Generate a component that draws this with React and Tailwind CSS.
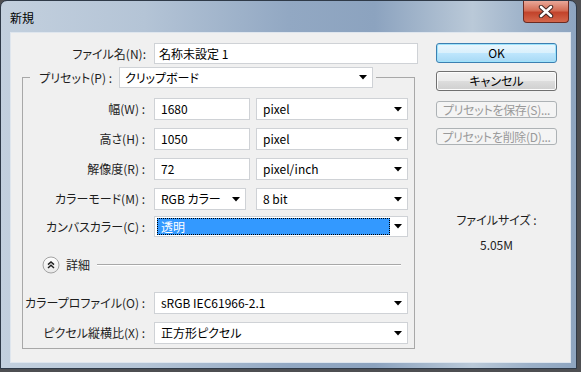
import React from 'react';

const Arrow = () => (
    <svg width="8" height="5" viewBox="0 0 8 5" className="shrink-0">
        <path d="M0 0 H8 L4 4.5 Z" fill="#000" />
    </svg>
);

const Field = ({ width, children }) => (
    <div className={`${width} h-[22px] bg-white border border-[#cfd2d6] flex items-center pl-[6px] text-black`}>
        {children}
    </div>
);

const Select = ({ width, value }) => (
    <div className={`${width} h-[22px] bg-white border border-[#cfd2d6] flex items-center justify-between pl-[6px] pr-[5px] text-black`}>
        <span>{value}</span>
        <Arrow />
    </div>
);

const Row = ({ label, children, className = '' }) => (
    <div className={`flex items-center ${className}`}>
        <span className="w-[129px] text-right pr-[7px] text-[#1e1e1e] whitespace-nowrap">{label}</span>
        <div className="flex items-center ml-[2px]">{children}</div>
    </div>
);

const Chevron = () => (
    <svg width="18" height="18" viewBox="0 0 18 18">
        <defs>
            <linearGradient id="cg" x1="0" y1="0" x2="0" y2="1">
                <stop offset="0" stopColor="#ffffff" />
                <stop offset="1" stopColor="#e8e8e8" />
            </linearGradient>
        </defs>
        <circle cx="9" cy="9" r="8" fill="url(#cg)" stroke="#a3a3a3" />
        <path d="M6 8.6 L9 5.9 L12 8.6 M6 12 L9 9.3 L12 12" fill="none" stroke="#222" strokeWidth="1.5" />
    </svg>
);

const Button = ({ children, variant = 'normal' }) => {
    const styles = {
        primary: 'h-[20px] border-[#3c7fb1] bg-[linear-gradient(#eaf6fd,#d9f0fc_50%,#bee6fd_51%,#a7d9f5)] text-black shadow-[inset_0_0_0_1px_#9ee3fb]',
        normal: 'h-[20px] border-[#707070] bg-[linear-gradient(#f2f2f2,#ebebeb_50%,#dddddd_51%,#cfcfcf)] text-black shadow-[inset_0_0_0_1px_#fcfcfc]',
        disabled: 'h-[17px] border-[#adb2b5] bg-[#f4f4f4] text-[#9a9a9a] tracking-[-0.3px]',
    };
    return (
        <div className={`w-[121px] border rounded-[3px] flex items-center justify-center whitespace-nowrap overflow-hidden ${styles[variant]}`}>
            {children}
        </div>
    );
};

export default function App() {
    return (
        <div className="w-[581px] h-[372px] bg-[#4e4f52] font-['Noto_Sans_CJK_JP',sans-serif] text-[12px] leading-[16px] [font-feature-settings:'palt']">
            <div className="w-[577px] h-[369px] rounded-t-[7px] border border-[#2f3a48] flex flex-col bg-[linear-gradient(90deg,#c3d0de_0%,#b4c4d6_25%,#92a8c3_50%,#8ca3bf_65%,#bac9d8_82%,#9bb0c8_92%,#8ea5c0_100%)]">
                <div className="h-[31px] flex justify-between pl-[9px] pr-[7px] shrink-0">
                    <span className="mt-[9px] text-black text-[12px]">新規</span>
                    <div className="w-[46px] h-[22px] rounded-b-[4px] border border-t-0 border-[#6b2b22] bg-[linear-gradient(#e9a899,#d46d55_45%,#c2432b_55%,#d4674c)] flex items-center justify-center">
                        <svg width="16" height="13" viewBox="0 0 16 13">
                            <path d="M3 2 L13 11 M13 2 L3 11" stroke="#3d2320" strokeWidth="4.4" strokeLinecap="round" />
                            <path d="M3 2 L13 11 M13 2 L3 11" stroke="#fff" strokeWidth="2.6" strokeLinecap="round" />
                        </svg>
                    </div>
                </div>
                <div className="flex-1 pl-[9px] pr-[5px] pb-[5px] flex">
                    <div className="flex-1 bg-[#f0f0f0] border border-[#dfe6ee] flex pl-[11px] pt-[10px]">
                        <div className="w-[396px] flex flex-col">
                            <div className="flex items-center h-[21px]">
                                <span className="w-[130px] text-right pr-[6px] text-[#1e1e1e]">ファイル名(N):</span>
                                <div className="ml-[2px] w-[264px] h-[21px] bg-white border border-[#cfd2d6] flex items-center pl-[4px] text-black">
                                    名称未設定 1
                                </div>
                            </div>
                            <fieldset className="mt-[3px] w-[393px] border border-[#a8a8a8] pb-[4px]">
                                <legend className="ml-[7px] flex items-center pr-[3px]">
                                    <span className="w-[89px] text-right pr-[7px] text-[#1e1e1e] whitespace-nowrap">プリセット(P) :</span>
                                    <div className="w-[254px] h-[21px] bg-white border border-[#cfd2d6] flex items-center justify-between pl-[5px] pr-[5px] text-black">
                                        <span>クリップボード</span>
                                        <Arrow />
                                    </div>
                                </legend>
                                <Row label="幅(W) :" className="mt-[10px]">
                                    <Field width="w-[96px]">1680</Field>
                                    <div className="ml-[6px]"><Select width="w-[152px]" value="pixel" /></div>
                                </Row>
                                <Row label="高さ(H) :" className="mt-[8px]">
                                    <Field width="w-[96px]">1050</Field>
                                    <div className="ml-[6px]"><Select width="w-[152px]" value="pixel" /></div>
                                </Row>
                                <Row label="解像度(R) :" className="mt-[8px]">
                                    <Field width="w-[96px]">72</Field>
                                    <div className="ml-[6px]"><Select width="w-[152px]" value="pixel/inch" /></div>
                                </Row>
                                <Row label="カラーモード(M) :" className="mt-[8px]">
                                    <Select width="w-[92px]" value="RGB カラー" />
                                    <div className="ml-[10px]"><Select width="w-[152px]" value="8 bit" /></div>
                                </Row>
                                <Row label="カンバスカラー(C) :" className="mt-[6px]">
                                    <div className="w-[254px] h-[21px] bg-white border border-[#cfd2d6] flex items-center justify-between pl-[2px] pr-[5px]">
                                        <div className="w-[233px] h-[17px] bg-[#3399ff] border border-dotted border-black flex items-center pl-[3px] text-white">
                                            透明
                                        </div>
                                        <Arrow />
                                    </div>
                                </Row>
                                <div className="mt-[19px] h-[18px] flex items-center pl-[19px]">
                                    <Chevron />
                                    <span className="ml-[6px] text-[#1e1e1e]">詳細</span>
                                    <div className="ml-[7px] w-[304px] h-[2px] border-t border-[#a8a8a8] border-b-white border-b" />
                                </div>
                                <Row label="カラープロファイル(O) :" className="mt-[18px]">
                                    <Select width="w-[254px]" value="sRGB IEC61966-2.1" />
                                </Row>
                                <Row label="ピクセル縦横比(X) :" className="mt-[8px]">
                                    <Select width="w-[254px]" value="正方形ピクセル" />
                                </Row>
                            </fieldset>
                        </div>
                        <div className="ml-[18px] w-[121px] flex flex-col">
                            <Button variant="primary">OK</Button>
                            <div className="mt-[8px]"><Button>キャンセル</Button></div>
                            <div className="mt-[10px]"><Button variant="disabled">プリセットを保存(S)...</Button></div>
                            <div className="mt-[10px]"><Button variant="disabled">プリセットを削除(D)...</Button></div>
                            <div className="mt-[67px] text-center text-[#1e1e1e]">ファイルサイズ :</div>
                            <div className="mt-[9px] text-center text-[#1e1e1e]">5.05M</div>
                        </div>
                    </div>
                </div>
            </div>
        </div>
    );
}
